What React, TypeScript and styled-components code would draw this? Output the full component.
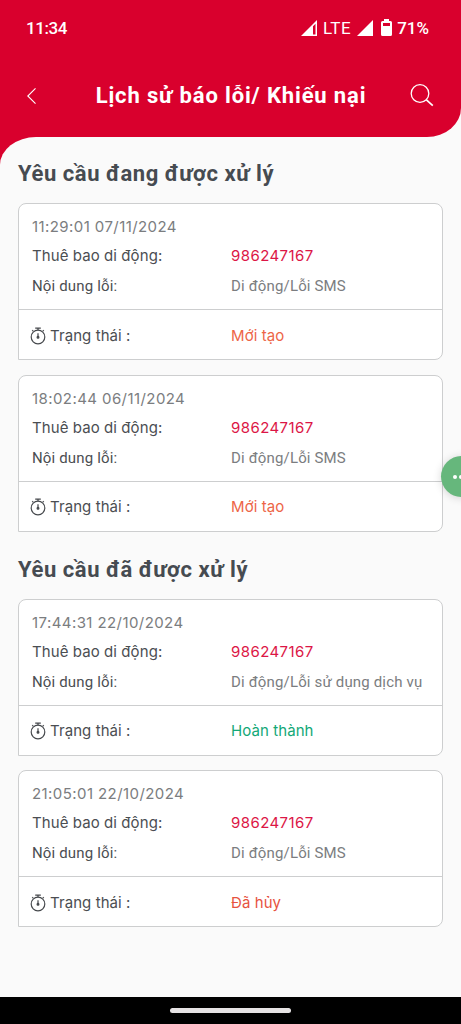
import React from 'react';
import styled, { createGlobalStyle } from 'styled-components';

const GlobalStyle = createGlobalStyle`
  *, *::before, *::after { box-sizing: border-box; }
  body { margin: 0; background: #fafafa; font-family: Inter, Roboto, sans-serif; }
`;

const Screen = styled.div`
  position: relative;
  display: flex;
  flex-direction: column;
  width: 461px;
  height: 1024px;
  overflow: hidden;
  background: #fafafa;
`;

const Header = styled.header`
  flex: none;
  height: 137px;
  background: #d9002d;
  border-bottom-right-radius: 34px 29px;
`;

const StatusBar = styled.div`
  display: flex;
  align-items: center;
  height: 55px;
  padding: 0 32px 0 26px;
  color: #fff;
  font: 500 17px/20px Roboto, sans-serif;
`;

const Clock = styled.span`
  flex: 1;
  letter-spacing: -0.4px;
`;

const StatusIcons = styled.div`
  display: flex;
  align-items: center;
`;

const Network = styled.span`
  margin: 0 6px;
  font-weight: 400;
  letter-spacing: 0.5px;
`;

const BatteryLevel = styled.span`
  margin-left: 5px;
`;

const NavBar = styled.div`
  display: flex;
  align-items: center;
  height: 82px;
  padding: 0 27px 1px 26px;
`;

const NavButton = styled.button`
  display: flex;
  flex: none;
  padding: 0;
  border: 0;
  background: none;
  color: #fff;
`;

const Title = styled.h1`
  flex: 1;
  margin: 0;
  padding-left: 15px;
  color: #fff;
  text-align: center;
  white-space: nowrap;
  font: 700 22px/30px Roboto, sans-serif;
  letter-spacing: 0.85px;
`;

const Corner = styled.div`
  flex: 1;
  background: linear-gradient(#d9002d, #d9002d) 0 0 / 40px 34px no-repeat;
`;

const Content = styled.main`
  height: 100%;
  padding: 20px 18px 0;
  border-top-left-radius: 36px 28px;
  background: #fafafa;
`;

const Section = styled.section`
  display: flex;
  flex-direction: column;
  gap: 14.5px;
  margin-bottom: 21px;
`;

const SectionTitle = styled.h2`
  margin: 0 0 -1.5px;
  color: #464b51;
  white-space: nowrap;
  font: 700 22px/33px Roboto, sans-serif;
  letter-spacing: 0.55px;
`;

const Card = styled.article`
  height: 157px;
  border: 1px solid #cdcecf;
  border-radius: 8px 8px 8px 0;
  background: #fff;
`;

const Details = styled.div`
  height: 106px;
  padding: 9px 0 0 13px;
  border-bottom: 1px solid #cdcecf;
`;

const Row = styled.div<{ $height: number }>`
  display: grid;
  grid-template-columns: 199px 1fr;
  align-items: center;
  height: ${(p) => p.$height}px;
`;

const Status = styled(Row)`
  padding-left: 13px;
`;

const tones = {
  label: '#4b4e52',
  muted: '#7b7d80',
  phone: '#dc1646',
  pending: '#ed6547',
  cancelled: '#e7533f',
  done: '#12a877',
};

const Text = styled.span<{ $tone: keyof typeof tones; $roboto?: boolean; $tracking?: number }>`
  color: ${(p) => tones[p.$tone]};
  white-space: nowrap;
  font: 400 15px/20px ${(p) => (p.$roboto ? 'Roboto' : 'Inter')}, sans-serif;
  letter-spacing: ${(p) => p.$tracking ?? 0.08}px;
`;

const StatusLabel = styled.div`
  display: flex;
  align-items: center;
  gap: 4px;
  margin-left: -2px;
`;

const SystemBar = styled.footer`
  display: flex;
  flex: none;
  justify-content: center;
  height: 27px;
  padding-top: 11px;
  background: #000;
`;

const HomeHandle = styled.div`
  width: 121px;
  height: 5px;
  border-radius: 3px;
  background: #e6e3e4;
`;

const ChatBubble = styled.button`
  position: absolute;
  top: 456px;
  left: 441px;
  display: flex;
  align-items: center;
  gap: 2px;
  width: 41px;
  height: 41px;
  padding: 0 0 0 12px;
  border: 0;
  border-radius: 50%;
  background: #66b77c;
  box-shadow: 0 1px 8px rgba(0, 0, 0, 0.16);
`;

const Dot = styled.i`
  width: 4px;
  height: 4px;
  border-radius: 50%;
  background: #fff;
`;

const SignalIcon = ({ partial = false }: { partial?: boolean }) => (
  <svg width="16" height="16" viewBox="0 0 16 16" fill="#fff">
    {partial ? (
      <path fillRule="evenodd" d="M0 16 16 0V16ZM12 6.2V14.4H14.5V3.7Z" />
    ) : (
      <path d="M0 16 16 0V16Z" />
    )}
  </svg>
);

const BatterySvg = styled.svg`
  margin-left: 8px;
`;

const BatteryIcon = () => (
  <BatterySvg width="11" height="17" viewBox="0 0 11 17">
    <path
      fill="#fff"
      fillRule="evenodd"
      d="M3 0H8V2H9.5Q11 2 11 3.5V15.5Q11 17 9.5 17H1.5Q0 17 0 15.5V3.5Q0 2 1.5 2H3ZM2 4V7H9V4Z"
    />
  </BatterySvg>
);

const BackIcon = () => (
  <svg width="11" height="18" viewBox="0 0 11 18" fill="none" stroke="currentColor" strokeWidth="1.1">
    <path d="M9.5 1.3 1.8 9l7.7 7.7" />
  </svg>
);

const SearchIcon = () => (
  <svg width="24" height="24" viewBox="0 0 24 24" fill="none" stroke="currentColor" strokeWidth="1.3">
    <circle cx="10" cy="9.5" r="8.8" />
    <path d="m16.4 15.9 6.4 5.8" strokeWidth="1.7" />
  </svg>
);

const StopwatchIcon = () => (
  <svg width="16" height="18" viewBox="0 0 16 18" fill="none" stroke="#46494d" strokeWidth="1.2">
    <circle cx="8" cy="10" r="6.8" />
    <path d="M5.2 1.1h5.6M8 1.1v2.2M2.2 4.2l1-1M13.8 4.2l-1-1M8 6.3v4" />
    <circle cx="8" cy="10.3" r="0.9" fill="#46494d" />
  </svg>
);

type Request = { time: string; issue: string; status: string; tone: keyof typeof tones };

const open: Request[] = [
  { time: '11:29:01 07/11/2024', issue: 'Di động/Lỗi SMS', status: 'Mới tạo', tone: 'pending' },
  { time: '18:02:44 06/11/2024', issue: 'Di động/Lỗi SMS', status: 'Mới tạo', tone: 'pending' },
];

const closed: Request[] = [
  { time: '17:44:31 22/10/2024', issue: 'Di động/Lỗi sử dụng dịch vụ', status: 'Hoàn thành', tone: 'done' },
  { time: '21:05:01 22/10/2024', issue: 'Di động/Lỗi SMS', status: 'Đã hủy', tone: 'cancelled' },
];

const RequestCard = ({ time, issue, status, tone }: Request) => (
  <Card>
    <Details>
      <Row $height={28}>
        <Text $tone="muted" $tracking={0.42}>{time}</Text>
      </Row>
      <Row $height={30}>
        <Text $tone="label">Thuê bao di động:</Text>
        <Text $tone="phone" $tracking={0.42}>986247167</Text>
      </Row>
      <Row $height={30}>
        <Text $tone="label" $roboto $tracking={0.15}>Nội dung lỗi:</Text>
        <Text $tone="muted" $roboto $tracking={0.16}>{issue}</Text>
      </Row>
    </Details>
    <Status $height={51}>
      <StatusLabel>
        <StopwatchIcon />
        <Text $tone="label">Trạng thái :</Text>
      </StatusLabel>
      <Text $tone={tone}>{status}</Text>
    </Status>
  </Card>
);

export default function App() {
  return (
    <Screen>
      <GlobalStyle />
      <Header>
        <StatusBar>
          <Clock>11:34</Clock>
          <StatusIcons>
            <SignalIcon partial />
            <Network>LTE</Network>
            <SignalIcon />
            <BatteryIcon />
            <BatteryLevel>71%</BatteryLevel>
          </StatusIcons>
        </StatusBar>
        <NavBar>
          <NavButton aria-label="Quay lại"><BackIcon /></NavButton>
          <Title>Lịch sử báo lỗi/ Khiếu nại</Title>
          <NavButton aria-label="Tìm kiếm"><SearchIcon /></NavButton>
        </NavBar>
      </Header>
      <Corner>
        <Content>
          <Section>
            <SectionTitle>Yêu cầu đang được xử lý</SectionTitle>
            {open.map((r) => <RequestCard key={r.time} {...r} />)}
          </Section>
          <Section>
            <SectionTitle>Yêu cầu đã được xử lý</SectionTitle>
            {closed.map((r) => <RequestCard key={r.time} {...r} />)}
          </Section>
        </Content>
      </Corner>
      <ChatBubble aria-label="Trợ giúp"><Dot /><Dot /><Dot /></ChatBubble>
      <SystemBar><HomeHandle /></SystemBar>
    </Screen>
  );
}
